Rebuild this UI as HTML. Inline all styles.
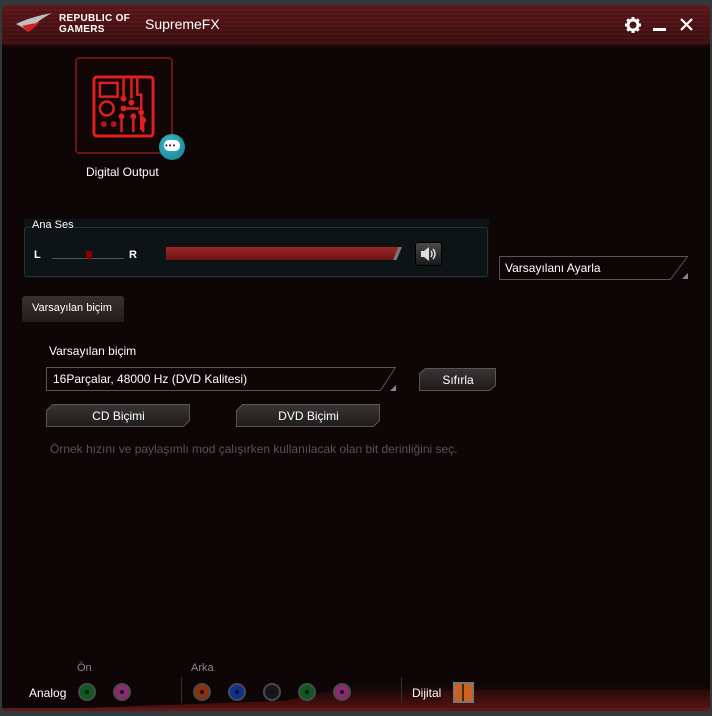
<!DOCTYPE html>
<html><head><meta charset="utf-8"><style>
*{margin:0;padding:0;box-sizing:border-box}
body{width:712px;height:716px;background:#33383b;font-family:"Liberation Sans","DejaVu Sans",sans-serif;color:#fff;overflow:hidden;position:relative}
.abs{position:absolute}
.t{position:absolute;white-space:nowrap;font-size:12px}
.jack{position:absolute;width:18px;height:18px;border-radius:50%;border:2px solid #4a4a4a;top:683px}
.jack::after{content:"";position:absolute;left:5px;top:5px;width:4px;height:4px;border-radius:50%;background:#111}
.bt{position:absolute;text-align:center;font-size:12px}
</style></head><body>
<div class="abs" style="left:2px;top:5px;width:708px;height:706px;background:#0e0506;border-radius:6px 6px 4px 4px;overflow:hidden">
<div class="abs" style="left:0;top:0;width:708px;height:40px;background:linear-gradient(180deg,#5a1416 0%,#4a1012 50%,#3a0c0e 100%)"></div>
<div class="abs" style="left:0;top:0;width:708px;height:40px;background:repeating-linear-gradient(180deg,rgba(255,255,255,0.03) 0 2px,transparent 2px 4px)"></div>
<div class="abs" style="left:0;top:40px;width:708px;height:2px;background:#1a0606"></div>
<div class="abs" style="left:0;top:680px;width:708px;height:26px;background:linear-gradient(180deg,transparent,#3a0c0c 60%,#5a1414);clip-path:polygon(0 100%,40% 60%,50% 0,100% 0,100% 100%)"></div>
<div class="abs" style="left:440px;top:685px;width:268px;height:21px;background:linear-gradient(#2a0a0a,#5a1515)"></div>
<div class="abs" style="left:0;top:703px;width:708px;height:3px;background:#601818"></div>
</div>
<svg class="abs" style="left:14px;top:10px" width="40" height="28" viewBox="0 0 40 28"><path d="M2 14 C10 10 22 6 38 3 C28 8 20 14 14 22 C10 18 6 16 2 14Z" fill="#c0c0c0"/><path d="M8 16 C14 14 20 14 26 12 C22 16 18 20 14 22Z" fill="#d02020"/></svg>
<div class="t" style="left:59px;top:13px;font-size:10px;font-weight:bold;line-height:11px;letter-spacing:0.3px">REPUBLIC OF<br>GAMERS</div>
<div class="t" style="left:145px;top:16px;font-size:14px">SupremeFX</div>
<svg class="abs" style="left:624px;top:16px" width="18" height="18" viewBox="0 0 18 18"><circle cx="9" cy="9" r="5" fill="none" stroke="#fff" stroke-width="3"/><g stroke="#fff" stroke-width="3"><path d="M9 1v3M9 14v3M1 9h3M14 9h3M3.3 3.3l2.1 2.1M12.6 12.6l2.1 2.1M3.3 14.7l2.1-2.1M12.6 5.4l2.1-2.1"/></g></svg>
<div class="abs" style="left:653px;top:28px;width:13px;height:3px;background:#fff"></div>
<svg class="abs" style="left:680px;top:18px" width="13" height="13"><path d="M1 1L12 12M12 1L1 12" stroke="#fff" stroke-width="2.2"/></svg>
<div class="abs" style="left:75px;top:57px;width:98px;height:97px;border:2px solid #6a1515;border-radius:4px;background:#120607"></div>
<svg class="abs" style="left:92px;top:75px" width="63" height="63" viewBox="0 0 64 64">
<rect x="2" y="2" width="60" height="60" rx="3" fill="none" stroke="#e01f1f" stroke-width="3"/>
<rect x="8" y="8" width="18" height="14" fill="none" stroke="#e01f1f" stroke-width="2.5"/>
<circle cx="15" cy="34" r="7" fill="none" stroke="#e01f1f" stroke-width="2.5"/>
<circle cx="12" cy="50" r="3" fill="#b01818"/><circle cx="22" cy="50" r="3" fill="#b01818"/>
<g stroke="#e01f1f" stroke-width="2.5" fill="none"><path d="M32 2v22M40 2v22M46 2v18h4v36M32 34h16M30 42v16M42 42v16M52 42v16"/></g>
<g fill="#e01f1f"><circle cx="32" cy="24" r="3"/><circle cx="40" cy="28" r="3"/><circle cx="32" cy="34" r="3"/><circle cx="50" cy="38" r="3"/><circle cx="30" cy="42" r="3"/><circle cx="42" cy="42" r="3"/><circle cx="52" cy="46" r="3"/></g>
</svg>
<div class="abs" style="left:159px;top:134px;width:26px;height:26px;border-radius:50%;background:radial-gradient(circle at 40% 35%,#3bb8c8,#0f7d8c)"></div>
<div class="abs" style="left:164px;top:140px;width:16px;height:11px;border-radius:5px;background:#fff"></div>
<div class="t" style="left:165px;top:141px;font-size:8px;color:#333;letter-spacing:1px">•••</div>
<div class="t" style="left:86px;top:165px;font-size:12px">Digital Output</div>
<div class="abs" style="left:24px;top:219px;width:465px;height:59px;background:#0e1315"></div>
<div class="abs" style="left:24px;top:227px;width:464px;height:50px;border:1px solid #2a3236;border-radius:3px"></div>
<div class="abs" style="left:31px;top:222px;width:42px;height:10px;background:#0e1315"></div>
<div class="t" style="left:32px;top:219px;font-size:11px">Ana Ses</div>
<div class="t" style="left:34px;top:249px;font-size:11px;font-weight:bold">L</div>
<div class="abs" style="left:52px;top:258px;width:72px;height:1px;background:#555"></div>
<div class="abs" style="left:86px;top:251px;width:6px;height:9px;background:#800;clip-path:polygon(0 0,100% 0,100% 65%,50% 100%,0 65%)"></div>
<div class="t" style="left:129px;top:249px;font-size:11px;font-weight:bold">R</div>
<div class="abs" style="left:166px;top:247px;width:236px;height:13px;background:linear-gradient(#a02626,#6a1616);clip-path:polygon(0 0,100% 0,96% 100%,0 100%)"></div>
<div class="abs" style="left:393px;top:247px;width:9px;height:13px;background:#777;clip-path:polygon(60% 0,100% 0,40% 100%,0 100%)"></div>
<div class="abs" style="left:415px;top:242px;width:27px;height:24px;background:linear-gradient(#4a4a4a,#1a1a1a);border:1px solid #000;border-radius:3px"></div>
<svg class="abs" style="left:419px;top:246px" width="18" height="16"><path d="M2 5h3l5-4v14l-5-4H2z" fill="#ddd"/><path d="M12 5q2 3 0 6M14 3q4 5 0 10" stroke="#ddd" stroke-width="1.5" fill="none"/></svg>
<svg class="abs" style="left:499px;top:256px" width="190" height="24"><path d="M0.5 0.5H188.5L171.5 23.5H0.5Z" fill="none" stroke="#5a5555"/><path d="M189 17v6h-6z" fill="#888"/></svg>
<div class="t" style="left:505px;top:261px;font-size:12px">Varsayılanı Ayarla</div>
<div class="abs" style="left:22px;top:296px;width:102px;height:26px;background:linear-gradient(#3a3030,#241c1c);border-radius:3px 3px 0 0"></div>
<div class="t" style="left:32px;top:302px;font-size:11px">Varsayılan biçim</div>
<div class="t" style="left:49px;top:344px;font-size:12px">Varsayılan biçim</div>
<svg class="abs" style="left:46px;top:367px" width="351" height="24"><path d="M0.5 0.5H349.5L334.5 23.5H0.5Z" fill="none" stroke="#5a5555"/><path d="M350 18v6h-6z" fill="#888"/></svg>
<div class="t" style="left:53px;top:372px;font-size:12px">16Parçalar, 48000 Hz (DVD Kalitesi)</div>
<svg class="abs" style="left:0;top:0" width="712" height="716">
<defs><linearGradient id="g" x1="0" y1="0" x2="0" y2="1"><stop offset="0" stop-color="#3a3535"/><stop offset="1" stop-color="#1f1b1b"/></linearGradient></defs>
<path d="M425.5 368.5H495.5V385.5L489.5 390.5H419.5V373.5Z" fill="url(#g)" stroke="#5a5555"/>
<path d="M52.5 404.5H189.5V420.5L183.5 426.5H46.5V410.5Z" fill="url(#g)" stroke="#5a5555"/>
<path d="M242.5 404.5H379.5V420.5L373.5 426.5H236.5V410.5Z" fill="url(#g)" stroke="#5a5555"/>
</svg>
<div class="bt" style="left:420px;top:373px;width:76px">Sıfırla</div>
<div class="bt" style="left:47px;top:409px;width:143px">CD Biçimi</div>
<div class="bt" style="left:237px;top:409px;width:143px">DVD Biçimi</div>
<div class="t" style="left:50px;top:442px;font-size:12px;color:#555">Örnek hızını ve paylaşımlı mod çalışırken kullanılacak olan bit derinliğini seç.</div>
<div class="t" style="left:77px;top:662px;font-size:11px;color:#888">Ön</div>
<div class="t" style="left:191px;top:662px;font-size:11px;color:#888">Arka</div>
<div class="t" style="left:29px;top:686px;font-size:12px">Analog</div>
<div class="jack" style="left:78px;background:#0b5a20"></div>
<div class="jack" style="left:113px;background:#8a2a70"></div>
<div class="abs" style="left:181px;top:677px;width:1px;height:26px;background:#333"></div>
<div class="jack" style="left:193px;background:#8a3010"></div>
<div class="jack" style="left:228px;background:#0c3090"></div>
<div class="jack" style="left:263px;background:#151520"></div>
<div class="jack" style="left:298px;background:#0b5a20"></div>
<div class="jack" style="left:333px;background:#8a2a70"></div>
<div class="abs" style="left:401px;top:677px;width:1px;height:26px;background:#333"></div>
<div class="t" style="left:412px;top:686px;font-size:12px">Dijital</div>
<div class="abs" style="left:453px;top:682px;width:21px;height:21px;border:2px solid #777;background:#d06020"></div>
<div class="abs" style="left:462px;top:684px;width:2px;height:17px;background:#331"></div>
</body></html>
